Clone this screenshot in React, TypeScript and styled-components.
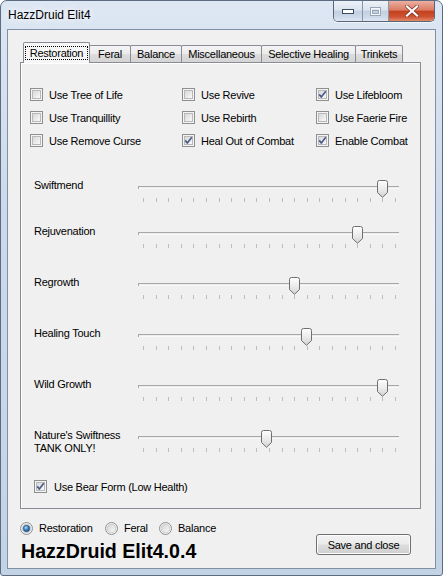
import React from "react";
import styled, { createGlobalStyle } from "styled-components";

const Global = createGlobalStyle`
  html, body { margin: 0; padding: 0; background: #ffffff; }
  body { font-family: "Liberation Sans", Arial, sans-serif; }
  #root { width: 443px; height: 576px; }
`;

const Window = styled.div`
  width: 443px;
  height: 576px;
  box-sizing: border-box;
  border: 1px solid #5d6b80;
  border-radius: 7px 7px 3px 3px;
  background: linear-gradient(180deg, #dde7f3 0%, #ccdaeb 35%, #c3d3e6 100%);
  display: flex;
  flex-direction: column;
  padding: 0 6px 6px 6px;
  overflow: hidden;
`;

const TitleBar = styled.div`
  height: 28px;
  flex: 0 0 28px;
  display: flex;
  align-items: flex-start;
`;

const TitleText = styled.div`
  margin: 6px 0 0 1px;
  font-size: 12px;
  line-height: 16px;
  color: #000;
  text-shadow: 0 0 6px #ffffff, 0 0 10px #ffffff;
`;

const CaptionGroup = styled.div`
  margin-left: auto;
  margin-right: 1px;
  display: flex;
  height: 20px;
  border: 1px solid #5a6678;
  border-top: none;
  border-radius: 0 0 5px 5px;
  overflow: hidden;
  box-shadow: 0 1px 0 rgba(255, 255, 255, 0.6);
`;

const CaptionButton = styled.div<{ $w: number; $close?: boolean }>`
  width: ${(p) => p.$w}px;
  height: 20px;
  box-sizing: border-box;
  display: flex;
  align-items: center;
  justify-content: center;
  border-left: ${(p) => (p.$close ? "1px solid #7a3a2e" : "none")};
  & + & {
    border-left: 1px solid #8796ab;
  }
  background: ${(p) =>
    p.$close
      ? "linear-gradient(180deg, #eab0a2 0%, #dc7a63 45%, #c4431f 52%, #cd5132 78%, #e38a6a 100%)"
      : "linear-gradient(180deg, #edf2f8 0%, #dae3ee 45%, #c3d0e1 52%, #ccd9e9 80%, #dfe8f3 100%)"};
`;

const Client = styled.div`
  flex: 1;
  border: 1px solid #8191a5;
  background: #f0f0f0;
  padding: 12px 14px 0 12px;
  display: flex;
  flex-direction: column;
`;

const TabControl = styled.div`
  width: 401px;
  display: flex;
  flex-direction: column;
`;

const TabStrip = styled.div`
  height: 20px;
  display: flex;
  align-items: flex-end;
  padding-left: 3px;
  position: relative;
  z-index: 1;
`;

const Tab = styled.div<{ $w: number; $active?: boolean }>`
  box-sizing: border-box;
  width: ${(p) => p.$w}px;
  height: ${(p) => (p.$active ? 21 : 17)}px;
  margin-bottom: ${(p) => (p.$active ? -1 : 0)}px;
  margin-left: -1px;
  &:first-child { margin-left: 0; }
  border: 1px solid #898c95;
  border-bottom: none;
  border-radius: 2px 2px 0 0;
  background: ${(p) =>
    p.$active
      ? "#f6f6f6"
      : "linear-gradient(180deg, #f4f4f4 0%, #ebebeb 50%, #dddddd 51%, #d4d4d4 100%)"};
  display: flex;
  justify-content: center;
  align-items: ${(p) => (p.$active ? "flex-start" : "center")};
  padding-top: ${(p) => (p.$active ? 3 : 0)}px;
  font-size: 11px;
  letter-spacing: -0.25px;
  color: #000;
  position: relative;
  z-index: ${(p) => (p.$active ? 2 : 1)};
  white-space: nowrap;
`;

const FocusLabel = styled.span`
  border: 1px dotted #000;
  padding: 0 4px;
  line-height: 12px;
`;

const Panel = styled.div`
  box-sizing: border-box;
  height: 447px;
  border: 1px solid #898c95;
  background: #f0f0f0;
  box-shadow: inset 1px 1px 0 #ffffff;
  padding: 20px 0 0 9px;
  display: flex;
  flex-direction: column;
`;

const CheckGrid = styled.div`
  display: grid;
  grid-template-columns: 152px 134px 1fr;
  grid-auto-rows: 23px;
`;

const CheckRow = styled.label<{ $gap?: number }>`
  display: flex;
  align-items: center;
  gap: ${(p) => p.$gap ?? 6}px;
  font-size: 11px;
  letter-spacing: -0.25px;
  color: #000;
  white-space: nowrap;
`;

const SliderList = styled.div`
  margin-top: 22px;
  padding-left: 4px;
  display: flex;
  flex-direction: column;
`;

const SliderRow = styled.div<{ $h: number }>`
  height: ${(p) => p.$h}px;
  display: grid;
  grid-template-columns: 104px 261px;
`;

const SliderLabel = styled.div`
  padding-top: 5px;
  font-size: 11px;
  line-height: 13px;
  letter-spacing: -0.25px;
  color: #000;
`;

const TrackArea = styled.div`
  position: relative;
  display: flex;
  flex-direction: column;
`;

const Track = styled.div`
  margin-top: 12px;
  height: 3px;
  box-sizing: border-box;
  border-top: 1px solid #a8a8a8;
  border-left: 1px solid #a8a8a8;
  background: linear-gradient(180deg, #e6e6e6 0%, #ffffff 100%);
`;

const TickRow = styled.div`
  margin-top: 9px;
  height: 4px;
  display: flex;
  justify-content: space-between;
  padding: 0 3px 0 5px;
`;

const Tick = styled.div`
  width: 1px;
  height: 4px;
  background: #bdbdbd;
`;

const Thumb = styled.svg`
  position: absolute;
  top: 6px;
  width: 11px;
  height: 18px;
`;

const BearRow = styled.div`
  height: 23px;
  display: flex;
  align-items: center;
`;

const Bottom = styled.div`
  width: 401px;
  display: flex;
  justify-content: space-between;
  align-items: flex-start;
`;

const BottomLeft = styled.div`
  display: flex;
  flex-direction: column;
`;

const RadioRow = styled.div`
  margin-top: 11px;
  height: 16px;
  display: flex;
  align-items: center;
`;

const RadioItem = styled.label<{ $w?: number }>`
  display: flex;
  align-items: center;
  gap: 6px;
  width: ${(p) => (p.$w ? `${p.$w}px` : "auto")};
  font-size: 11px;
  letter-spacing: -0.25px;
  color: #000;
  white-space: nowrap;
`;

const BigTitle = styled.div`
  margin: 4px 0 0 1px;
  font-size: 19.6px;
  line-height: 23px;
  font-weight: bold;
  color: #000;
  white-space: nowrap;
`;

const Button = styled.div`
  margin: 25px 10px 0 0;
  width: 95px;
  height: 21px;
  box-sizing: border-box;
  border: 1px solid #707070;
  border-radius: 3px;
  background: linear-gradient(180deg, #f2f2f2 0%, #ebebeb 48%, #dddddd 52%, #cfcfcf 100%);
  box-shadow: inset 0 0 0 1px #fcfcfc;
  display: flex;
  align-items: center;
  justify-content: center;
  font-size: 11px;
  letter-spacing: -0.25px;
  color: #000;
`;

const CheckBox = ({ checked }: { checked?: boolean }) => (
  <svg width="13" height="13" viewBox="0 0 13 13" style={{ flex: "0 0 13px" }}>
    <defs>
      <linearGradient id="cbg" x1="0" y1="0" x2="1" y2="1">
        <stop offset="0" stopColor="#d6d6d6" />
        <stop offset="1" stopColor="#fbfbfb" />
      </linearGradient>
    </defs>
    <rect x="0.5" y="0.5" width="12" height="12" fill="#f4f4f4" stroke="#8e8f8f" />
    <rect x="2.5" y="2.5" width="8" height="8" fill="url(#cbg)" stroke="#b9b9b9" strokeWidth="1" />
    {checked && (
      <path d="M3.2 6.4 L5.3 9 L9.8 3.2" fill="none" stroke="#4a5c8c" strokeWidth="1.7" strokeLinejoin="round" />
    )}
  </svg>
);

const Radio = ({ checked }: { checked?: boolean }) => (
  <svg width="13" height="13" viewBox="0 0 13 13" style={{ flex: "0 0 13px" }}>
    <defs>
      <linearGradient id="rbg" x1="0" y1="0" x2="1" y2="1">
        <stop offset="0" stopColor="#d3d3d3" />
        <stop offset="1" stopColor="#fafafa" />
      </linearGradient>
      <radialGradient id="rdot" cx="0.4" cy="0.35" r="0.7">
        <stop offset="0" stopColor="#a6dcfb" />
        <stop offset="0.5" stopColor="#3d86c6" />
        <stop offset="1" stopColor="#17467e" />
      </radialGradient>
    </defs>
    <circle cx="6.5" cy="6.5" r="6" fill="#f4f4f4" stroke="#8e8f8f" />
    <circle cx="6.5" cy="6.5" r="4.3" fill="url(#rbg)" stroke="#c3c3c3" strokeWidth="0.8" />
    {checked && <circle cx="6.5" cy="6.5" r="3.2" fill="url(#rdot)" stroke="#1d4170" strokeWidth="0.6" />}
  </svg>
);

const SliderThumb = ({ value }: { value: number }) => (
  <Thumb viewBox="0 0 11 18" style={{ left: `${12.6 * value - 0.5}px` }}>
    <defs>
      <linearGradient id="thg" x1="0" y1="0" x2="0" y2="1">
        <stop offset="0" stopColor="#fefefe" />
        <stop offset="0.5" stopColor="#ececec" />
        <stop offset="1" stopColor="#d2d2d2" />
      </linearGradient>
    </defs>
    <path
      d="M0.5 2.5 Q0.5 0.5 2.5 0.5 H8.5 Q10.5 0.5 10.5 2.5 V12.5 L5.5 17.3 L0.5 12.5 Z"
      fill="url(#thg)"
      stroke="#6f6f6f"
    />
  </Thumb>
);

const sliders: { label: string[]; value: number; h: number }[] = [
  { label: ["Swiftmend"], value: 19, h: 46 },
  { label: ["Rejuvenation"], value: 17, h: 51 },
  { label: ["Regrowth"], value: 12, h: 51 },
  { label: ["Healing Touch"], value: 13, h: 51 },
  { label: ["Wild Growth"], value: 19, h: 51 },
  { label: ["Nature's Swiftness", "TANK ONLY!"], value: 9.8, h: 51 },
];

const checks: { text: string; checked: boolean }[] = [
  { text: "Use Tree of Life", checked: false },
  { text: "Use Revive", checked: false },
  { text: "Use Lifebloom", checked: true },
  { text: "Use Tranquillity", checked: false },
  { text: "Use Rebirth", checked: false },
  { text: "Use Faerie Fire", checked: false },
  { text: "Use Remove Curse", checked: false },
  { text: "Heal Out of Combat", checked: true },
  { text: "Enable Combat", checked: true },
];

const tabs = [
  { name: "Restoration", w: 67 },
  { name: "Feral", w: 42 },
  { name: "Balance", w: 52 },
  { name: "Miscellaneous", w: 81 },
  { name: "Selective Healing", w: 95 },
  { name: "Trinkets", w: 48 },
];

export default function App() {
  return (
    <>
      <Global />
      <Window>
        <TitleBar>
          <TitleText>HazzDruid Elit4</TitleText>
          <CaptionGroup>
            <CaptionButton $w={28}>
              <svg width="12" height="5" viewBox="0 0 12 5">
                <rect x="0.5" y="0.5" width="11" height="4" fill="#ffffff" stroke="#3e4a5e" />
              </svg>
            </CaptionButton>
            <CaptionButton $w={26}>
              <svg width="11" height="9" viewBox="0 0 11 9">
                <rect x="0.5" y="0.5" width="10" height="8" fill="none" stroke="#9aa6b6" />
                <rect x="1.5" y="1.5" width="8" height="6" fill="none" stroke="#f4f7fb" />
                <rect x="2.5" y="3.5" width="6" height="3" fill="none" stroke="#9aa6b6" />
              </svg>
            </CaptionButton>
            <CaptionButton $w={46} $close>
              <svg width="14" height="12" viewBox="0 0 14 12">
                <path d="M2 1.5 L12 10.5 M12 1.5 L2 10.5" stroke="#7a3326" strokeWidth="3.6" strokeLinecap="square" />
                <path d="M2 1.5 L12 10.5 M12 1.5 L2 10.5" stroke="#ffffff" strokeWidth="2.2" strokeLinecap="square" />
              </svg>
            </CaptionButton>
          </CaptionGroup>
        </TitleBar>
        <Client>
          <TabControl>
            <TabStrip>
              {tabs.map((t, i) => (
                <Tab key={t.name} $w={t.w} $active={i === 0}>
                  {i === 0 ? <FocusLabel>{t.name}</FocusLabel> : t.name}
                </Tab>
              ))}
            </TabStrip>
            <Panel>
              <CheckGrid>
                {checks.map((c) => (
                  <CheckRow key={c.text}>
                    <CheckBox checked={c.checked} />
                    {c.text}
                  </CheckRow>
                ))}
              </CheckGrid>
              <SliderList>
                {sliders.map((s) => (
                  <SliderRow key={s.label[0]} $h={s.h}>
                    <SliderLabel>
                      {s.label.map((l) => (
                        <div key={l}>{l}</div>
                      ))}
                    </SliderLabel>
                    <TrackArea>
                      <Track />
                      <TickRow>
                        {Array.from({ length: 21 }).map((_, i) => (
                          <Tick key={i} />
                        ))}
                      </TickRow>
                      <SliderThumb value={s.value} />
                    </TrackArea>
                  </SliderRow>
                ))}
                <BearRow>
                  <CheckRow $gap={7}>
                    <CheckBox checked />
                    Use Bear Form (Low Health)
                  </CheckRow>
                </BearRow>
              </SliderList>
            </Panel>
          </TabControl>
          <Bottom>
            <BottomLeft>
              <RadioRow>
                <RadioItem $w={85}>
                  <Radio checked />
                  Restoration
                </RadioItem>
                <RadioItem $w={54}>
                  <Radio />
                  Feral
                </RadioItem>
                <RadioItem>
                  <Radio />
                  Balance
                </RadioItem>
              </RadioRow>
              <BigTitle>HazzDruid Elit4.0.4</BigTitle>
            </BottomLeft>
            <Button>Save and close</Button>
          </Bottom>
        </Client>
      </Window>
    </>
  );
}
